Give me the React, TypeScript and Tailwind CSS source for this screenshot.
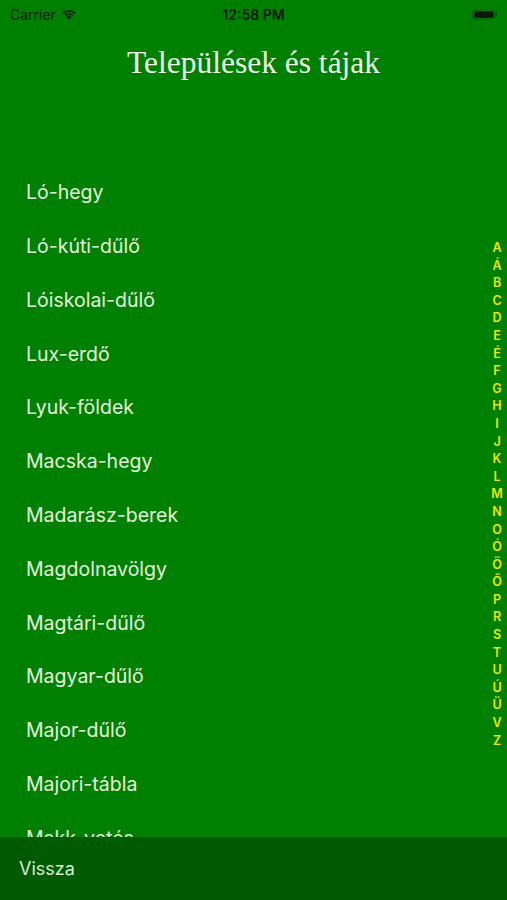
import React from "react";

const items = [
  "Ló-hegy",
  "Ló-kúti-dűlő",
  "Lóiskolai-dűlő",
  "Lux-erdő",
  "Lyuk-földek",
  "Macska-hegy",
  "Madarász-berek",
  "Magdolnavölgy",
  "Magtári-dűlő",
  "Magyar-dűlő",
  "Major-dűlő",
  "Majori-tábla",
  "Makk-vetés",
  "Malom-dűlő",
];

const letters = ["A","Á","B","C","D","E","É","F","G","H","I","J","K","L","M","N","O","Ó","Ö","Ő","P","R","S","T","U","Ú","Ü","V","Z"];

export default function App() {
  return (
    <div className="relative w-[507px] h-[900px] bg-[#008000] overflow-hidden flex flex-col" style={{ fontFamily: "Inter, 'Liberation Sans', sans-serif" }}>
      {/* status bar */}
      <div className="h-[28px] flex items-center justify-between px-[10px] text-[#0a1a0a] shrink-0 relative">
        <div className="flex items-center gap-[5px] text-[14px]">
          <span>Carrier</span>
          <svg width="16" height="12" viewBox="0 0 16 12">
            <path d="M8 11.5 L5.6 8.9 A3.6 3.6 0 0 1 10.4 8.9 Z" fill="#0a1a0a" />
            <path d="M3.6 6.9 A6.4 6.4 0 0 1 12.4 6.9 L11.2 8.1 A4.6 4.6 0 0 0 4.8 8.1 Z" fill="#0a1a0a" />
            <path d="M1.4 4.7 A9.5 9.5 0 0 1 14.6 4.7 L13.4 5.9 A7.7 7.7 0 0 0 2.6 5.9 Z" fill="#0a1a0a" />
          </svg>
        </div>
        <div className="absolute left-0 right-0 text-center text-[14px] font-semibold">12:58 PM</div>
        <div className="flex items-center">
          <div className="w-[24px] h-[11px] rounded-[3px] border border-[#0a1a0a]/40 p-[1px]">
            <div className="w-full h-full bg-[#0a1a0a] rounded-[2px]" />
          </div>
          <div className="w-[1.5px] h-[4px] bg-[#0a1a0a]/40 rounded-r" />
        </div>
      </div>
      {/* title */}
      <div className="h-[70px] flex items-center justify-center shrink-0">
        <h1 className="text-[31.5px] text-[#eef4e8] pb-[1px]" style={{ fontFamily: "'Liberation Serif', serif" }}>Települések és tájak</h1>
      </div>
      {/* list */}
      <div className="flex-1 overflow-hidden pt-[68px]">
        {items.map((t) => (
          <div key={t} className="h-[53.8px] flex items-center pl-[26px] text-[19.5px] text-[#e4f2dc]">
            {t}
          </div>
        ))}
      </div>
      {/* bottom bar */}
      <div className="h-[63px] bg-[#005a00] flex items-center pl-[19px] text-[18px] leading-[24px] text-[#d8ecd0] shrink-0">
        Vissza
      </div>
      {/* index */}
      <div className="absolute right-[2px] top-[239px] w-[16px] flex flex-col items-center text-[12.5px] font-semibold text-[#e8e800] leading-[17.6px]">
        {letters.map((l) => (
          <span key={l}>{l}</span>
        ))}
      </div>
    </div>
  );
}
